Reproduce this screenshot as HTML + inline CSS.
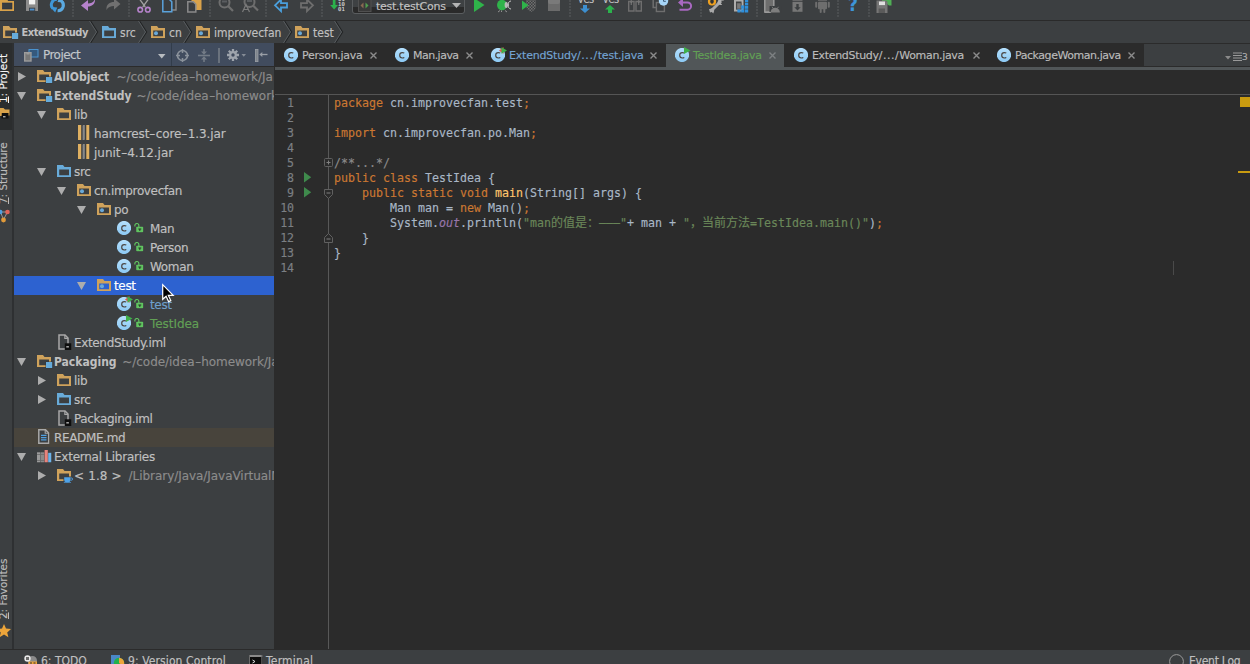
<!DOCTYPE html><html><head><meta charset="utf-8"><title>IDEA</title><style>
*{box-sizing:border-box;margin:0;padding:0}
html,body{width:1250px;height:664px;overflow:hidden;background:#3c3f41}
body{position:relative;font-family:"DejaVu Sans","Liberation Sans","Noto Sans CJK SC",sans-serif;font-size:12px;color:#c0c0c0;-webkit-text-stroke:0.15px}
.abs{position:absolute}
.t{position:absolute;white-space:nowrap;line-height:19px;height:19px;letter-spacing:-0.35px}
.b{font-family:"DejaVu Sans Condensed","DejaVu Sans","Liberation Sans",sans-serif;font-weight:bold;letter-spacing:0;-webkit-text-stroke:0}
.g{color:#8c8c8c}
.hy{display:inline-block;transform:scaleX(1.5);margin:0 1.2px}
svg{position:absolute;overflow:visible}
#toolbar{left:0;top:0;width:1250px;height:20px;background:#3c3f41}
#tbline{left:0;top:20px;width:1250px;height:1px;background:#2a2a2a}
#nav{left:0;top:21px;width:1250px;height:22px;background:#3c3f41}
.nt{position:absolute;top:22px;line-height:20px;font-size:12px;font-family:"DejaVu Sans Condensed","DejaVu Sans","Liberation Sans",sans-serif;white-space:nowrap;letter-spacing:0}
.ntb{font-family:"DejaVu Sans Condensed","DejaVu Sans","Liberation Sans",sans-serif;font-weight:bold;font-size:11px;letter-spacing:-0.42px;-webkit-text-stroke:0}
#stripe{left:0;top:43px;width:12px;height:606px;background:#3c3f41;overflow:hidden}
#stripeline{left:11.5px;top:43px;width:2.5px;height:606px;background:#2e3032}
#proj{left:14px;top:43px;width:260px;height:606px;background:#3c3f41;overflow:hidden}
#phead{left:0;top:0;width:260px;height:23px;background:#414c5e}
#pheadline{left:0;top:23px;width:260px;height:1px;background:#2b2b2b}
#sel{left:0;top:233px;width:260px;height:19px;background:#2d62d0}
#readme{left:0;top:385px;width:260px;height:19px;background:#48443c}
#vsep{left:274px;top:43px;width:1px;height:606px;background:#2b2b2b}
#editor{left:275px;top:43px;width:975px;height:606px;background:#2b2b2b;overflow:hidden}
#tabs{left:0;top:0;width:975px;height:24px;background:#3c3f41;box-shadow:inset 0 1px 0 #2b2b2b,inset 0 -1px 0 #2b2b2b}
.tab{position:absolute;top:0;height:24px;background:#2b2b2b}
.tab.sel{background:#515658;top:1px;height:23px}
.tabt{position:absolute;top:3px;line-height:20px;font-size:11px;white-space:nowrap;letter-spacing:-0.2px;color:#bbbbbb}
.x{position:absolute;top:8px;width:7px;height:7px}
#tabline{left:0;top:24px;width:975px;height:3px;background:#515658}
#edline{left:0;top:51px;width:975px;height:1px;background:#555555}
#gutline{left:52.7px;top:52px;width:1.3px;height:554px;background:#585858}
.ln{position:absolute;left:0;width:19px;text-align:right;font-family:"DejaVu Sans Mono","Liberation Mono","Noto Sans CJK SC",monospace;font-size:11.6px;line-height:15px;color:#7b7f83;letter-spacing:-0.1px}
.cl{position:absolute;left:59px;font-family:"DejaVu Sans Mono","Liberation Mono","Noto Sans CJK SC",monospace;font-size:11.63px;line-height:15px;white-space:pre;color:#a9b7c6}
.cj{font-size:12px} .k{color:#cc7832} .s{color:#6a8759} .m{color:#ffc66d} .f{color:#9876aa;font-style:italic} .c{color:#8a8a8a}
#bottomline{left:0;top:649px;width:1250px;height:1px;background:#2b2b2b}
#bottom{left:0;top:650px;width:1250px;height:14px;background:#3c3f41;overflow:hidden}
.bt{position:absolute;top:1.7px;line-height:19px;font-size:12px;white-space:nowrap;font-family:"DejaVu Sans Condensed","DejaVu Sans","Liberation Sans",sans-serif}
.vt{position:absolute;white-space:nowrap;font-size:10.4px;line-height:13px;transform-origin:0 0;transform:rotate(-90deg);letter-spacing:0}
</style></head><body>
<svg width="0" height="0" style="position:absolute"><defs>
<linearGradient id="cg" x1="0" y1="0" x2="0" y2="1"><stop offset="0" stop-color="#b5e0fd"/><stop offset="1" stop-color="#8cc9f4"/></linearGradient>
<symbol id="i-folder" viewBox="0 0 14 12"><path fill-rule="evenodd" d="M0 0h6l1.500 2H14v10H0z M2.200 4.400h9.800v5.800H2.200z" fill="#cfa25b"/></symbol>
<symbol id="i-srcfolder" viewBox="0 0 14 12"><path fill-rule="evenodd" d="M0 0h6l1.500 2H14v10H0z M2.200 4.400h9.800v5.800H2.200z" fill="#68abd9"/></symbol>
<symbol id="i-module" viewBox="0 0 16 14"><path fill-rule="evenodd" d="M0 0h6l1.500 2H14v10H0z M2.200 4.400h9.800v5.800H2.200z" fill="#cfa25b"/><rect x="8.600" y="6.600" width="7" height="6.800" fill="#33373a"/><rect x="9" y="7" width="6.200" height="6" fill="#66abdb"/></symbol>
<symbol id="i-pkg" viewBox="0 0 14 12"><path fill-rule="evenodd" d="M0 0h6l1.500 2H14v10H0z M2.200 4.400h9.800v5.800H2.200z" fill="#cfa25b"/><circle cx="5" cy="7.200" r="2" fill="#6aa9d8"/></symbol>
<symbol id="i-class" viewBox="0 0 14 14"><circle cx="7" cy="7" r="7.100" fill="url(#cg)"/><path d="M9.300 5.100Q8.300 4.600 7.300 4.600Q4.700 4.600 4.700 7.300Q4.700 10 7.300 10Q8.300 10 9.300 9.500" fill="none" stroke="#4a4441" stroke-width="1.150"/></symbol>
<symbol id="i-lock" viewBox="0 0 10 10"><path d="M0.900 3.600V2.600a2.050 2.050 0 0 1 4.100 0V4" fill="none" stroke="#60c460" stroke-width="1.200"/><rect x="2.300" y="3.800" width="7.200" height="5.700" rx="0.800" fill="#60c460"/><path d="M4.500 5.600h3v1h-1v1.700h-1V6.600h-1z" fill="#263026"/></symbol>
<symbol id="i-jar" viewBox="0 0 11.500 15"><rect x="0" y="0" width="3.200" height="15" fill="#dfb061"/><rect x="8.300" y="0" width="3.200" height="15" fill="#dfb061"/><path d="M4.600 0l2.300 1-2.300 1 2.300 1-2.300 1 2.300 1-2.300 1 2.300 1-2.300 1 2.300 1-2.300 1 2.300 1-2.300 1 2.300 1-2.300 1 2.300 1" fill="none" stroke="#9a9a9a" stroke-width="0.900"/></symbol>
<symbol id="i-iml" viewBox="0 0 13.500 16"><path d="M1 1h6l3 3v11H1z" fill="#3c3f41" stroke="#a8a8a8" stroke-width="1.500"/><path d="M6.800 1v3.400h3.300" fill="none" stroke="#a8a8a8" stroke-width="1.100"/><rect x="6.800" y="9.300" width="6.700" height="6.700" fill="#0e0e0e"/><rect x="8.300" y="12.300" width="2.600" height="1.100" fill="#e0e0e0"/></symbol>
<symbol id="i-md" viewBox="0 0 11.500 15"><path d="M0.800 0.800h6.700l3.200 3.200v10.200H0.800z" fill="#3c3f41" stroke="#a8a8a8" stroke-width="1.500"/><path d="M7.200 0.800v3.500h3.400" fill="none" stroke="#a8a8a8" stroke-width="1.100"/><path d="M3 6.400h5.500M3 8.600h5.500M3 10.800h5.500" stroke="#4f9fe0" stroke-width="1.200"/></symbol>
<symbol id="i-libs" viewBox="0 0 14.500 12.500"><rect x="0" y="2.300" width="3.500" height="10.200" fill="#9b9b9b"/><rect x="4" y="2.300" width="3.200" height="10.200" fill="#8a8a8a"/><rect x="7.600" y="0" width="3.200" height="12.500" fill="#e8837c"/><rect x="11.200" y="2.800" width="3.300" height="9.700" fill="#6eb3ea"/><path d="M0 4.500h7.200M0 10.500h7.200" stroke="#6a6a6a" stroke-width="0.800"/></symbol>
<symbol id="i-jdk" viewBox="0 0 16 14"><path fill-rule="evenodd" d="M0 0h6l1.500 2H14v10H0z M2.200 4.400h9.800v5.800H2.200z" fill="#cfa25b"/><rect x="6.500" y="7.500" width="9" height="6.500" fill="#3c3f41"/><path d="M7.200 8.200h6.300v2.500a2.500 2.500 0 0 1-2.500 2.500h-1.300a2.500 2.500 0 0 1-2.500-2.500z" fill="#4fa3e8"/><path d="M13.500 9h1a1 1 0 0 1 0 2.200h-1" fill="none" stroke="#4fa3e8" stroke-width="0.900"/><path d="M6.800 13.700h7.200" stroke="#4fa3e8" stroke-width="0.800"/></symbol>
<symbol id="i-x" viewBox="0 0 7 7"><path d="M0.5 0.5l6 6M6.5 0.5l-6 6" stroke="#8e8e8e" stroke-width="1.5"/></symbol>
<symbol id="i-run" viewBox="0 0 5 5"><path d="M0 0l5 2.5L0 5z" fill="#3fae3f"/></symbol>
</defs></svg>
<div id="toolbar" class="abs">
<svg style="left:72px;top:0" width="2" height="18"><path d="M1 0v18" stroke="#4b4e50" stroke-width="2" stroke-dasharray="2 1"/></svg>
<svg style="left:128px;top:0" width="2" height="18"><path d="M1 0v18" stroke="#4b4e50" stroke-width="2" stroke-dasharray="2 1"/></svg>
<svg style="left:209px;top:0" width="2" height="18"><path d="M1 0v18" stroke="#4b4e50" stroke-width="2" stroke-dasharray="2 1"/></svg>
<svg style="left:265px;top:0" width="2" height="18"><path d="M1 0v18" stroke="#4b4e50" stroke-width="2" stroke-dasharray="2 1"/></svg>
<svg style="left:321px;top:0" width="2" height="18"><path d="M1 0v18" stroke="#4b4e50" stroke-width="2" stroke-dasharray="2 1"/></svg>
<svg style="left:569px;top:0" width="2" height="18"><path d="M1 0v18" stroke="#4b4e50" stroke-width="2" stroke-dasharray="2 1"/></svg>
<svg style="left:700px;top:0" width="2" height="18"><path d="M1 0v18" stroke="#4b4e50" stroke-width="2" stroke-dasharray="2 1"/></svg>
<svg style="left:756px;top:0" width="2" height="18"><path d="M1 0v18" stroke="#4b4e50" stroke-width="2" stroke-dasharray="2 1"/></svg>
<svg style="left:837px;top:0" width="2" height="18"><path d="M1 0v18" stroke="#4b4e50" stroke-width="2" stroke-dasharray="2 1"/></svg>
<svg style="left:868px;top:0" width="2" height="18"><path d="M1 0v18" stroke="#4b4e50" stroke-width="2" stroke-dasharray="2 1"/></svg>
<svg style="left:0px;top:-4px" width="14" height="16"><path d="M0 0h6.500l1.500 5H14v10H0z" fill="#d9a24a"/><rect x="2.300" y="7" width="9.700" height="6" fill="#3a3d40" stroke="#2d3245" stroke-width="0.600"/></svg>
<svg style="left:26px;top:-4px" width="12" height="16"><path d="M0 0h12v15H0z" fill="#8c8c8c"/><rect x="3" y="0" width="6.200" height="8.400" fill="#f2f2f2"/><rect x="3" y="11.700" width="6.200" height="3.300" fill="#3c3f41"/><rect x="3.800" y="12.600" width="4.600" height="1.900" fill="#4a90d0"/></svg>
<svg style="left:50px;top:-3px" width="15" height="16"><path d="M7 2.300A5.500 5.500 0 0 0 2.800 11.500" fill="none" stroke="#3f96d6" stroke-width="3"/><path d="M0 9.800L7.300 10.500 5.200 15.600z" fill="#3f96d6"/><path d="M7.600 13.800A5.500 5.500 0 0 0 11.500 4.200" fill="none" stroke="#5aa9e0" stroke-width="3"/><path d="M14.500 5.500L7.500 5 9.500 0z" fill="#5aa9e0"/></svg>
<svg style="left:81px;top:-4px" width="15" height="16"><path d="M14 3c0.500 5-3 7.500-7 7.500V15L0 9.500 7 4v3.500c3 0 5.500-1 7-4.500z" fill="#b683cc"/></svg>
<svg style="left:106px;top:-4px" width="15" height="16"><path d="M0.500 14c-0.500-5.500 3-8 7.500-8V2.500L14.500 8 8 13.500V10c-3.500 0-6 1-7.500 4z" fill="#707070"/></svg>
<svg style="left:137px;top:-4px" width="14" height="17"><path d="M2.500 3L8.300 11M11.500 3L5.700 11" stroke="#a0a0a0" stroke-width="1.300" fill="none"/><circle cx="3.200" cy="13.700" r="2.300" fill="none" stroke="#b683cc" stroke-width="1.600"/><circle cx="10.800" cy="13.700" r="2.300" fill="none" stroke="#b683cc" stroke-width="1.600"/></svg>
<svg style="left:162px;top:-4px" width="15" height="17"><path d="M6.500 0.600h7.500v13.400H6.500z" fill="#3c3f41" stroke="#8a8a8a" stroke-width="1.400"/><path d="M0.800 2.800h6l3 3v10H0.800z" fill="#3a3d40" stroke="#5aa3dc" stroke-width="1.500"/></svg>
<svg style="left:187px;top:-4px" width="15" height="17"><rect x="4.500" y="0" width="10" height="14" fill="#d9a24a"/><path d="M0.800 5.800h5.500l2.500 2.500v7.800H0.800z" fill="#3a3d40" stroke="#8a8a8a" stroke-width="1.500"/></svg>
<svg style="left:218px;top:-4px" width="16" height="16"><circle cx="6.500" cy="6.500" r="5" fill="none" stroke="#6e6e6e" stroke-width="2"/><path d="M10.300 10.300L15 15" stroke="#6e6e6e" stroke-width="2.200"/><path d="M4 5.500h5" stroke="#5a5d60" stroke-width="2"/></svg>
<svg style="left:242px;top:-4px" width="17" height="17"><circle cx="7.500" cy="6" r="5" fill="none" stroke="#6e6e6e" stroke-width="2"/><path d="M11.300 9.800L16 14.500" stroke="#6e6e6e" stroke-width="2.200"/><path d="M0.500 16L4 8.500 7.500 16M1.800 13.500h4.400" stroke="#7a7a7a" stroke-width="1.200" fill="none"/><path d="M5 5h5" stroke="#5a5d60" stroke-width="2"/></svg>
<svg style="left:274px;top:-4px" width="14" height="17"><path d="M1 9.300L7 3.500v3.600h6v4.400h-6v3.600z" fill="none" stroke="#4a9fdc" stroke-width="1.800"/></svg>
<svg style="left:300px;top:-4px" width="14" height="17"><path d="M13 9.300L7 3.500v3.600h-6v4.400h6v3.600z" fill="none" stroke="#6e6e6e" stroke-width="1.800"/></svg>
<svg style="left:330px;top:-4px" width="16" height="17"><path d="M2.800 0h2.700v9H8L4.100 13.500 0.200 9h2.600z" fill="#2bb24c"/></svg>
<div class="abs" style="left:338px;top:-3px;font-family:'DejaVu Sans Mono',monospace;font-size:5.500px;line-height:5px;color:#d8d8d8;letter-spacing:0.3px">01<br>10<br>01</div>
<div class="abs" style="left:352px;top:-4px;width:113px;height:18px;border:1px solid #5a5d5f;border-radius:3px;background:linear-gradient(#3e4143 0,#3e4143 62%,#2a2a2a 65%,#2a2a2a 100%)"></div>
<svg style="left:358px;top:-1px" width="13" height="13"><rect x="0.500" y="0.500" width="12.500" height="12" fill="#3a3a3a" stroke="#505050"/><path d="M5.500 3.500v6L2.500 6.500z" fill="#8a6a52"/><path d="M7.500 3.500v6l3-3z" fill="#4f9e4f"/></svg>
<div class="abs" style="left:376px;top:-1px;font-size:11px;line-height:16px;letter-spacing:-0.25px;color:#c4c4c4;white-space:nowrap">test.testCons</div>
<svg style="left:452px;top:3px" width="9" height="5"><path d="M0 0h9L4.500 5z" fill="#b4b4b4"/></svg>
<svg style="left:474px;top:-2px" width="11" height="14"><path d="M0 0l10.500 7L0 14z" fill="#2fb34a"/></svg>
<svg style="left:497px;top:-4px" width="15" height="17"><ellipse cx="5" cy="9" rx="5" ry="5.200" fill="#2fb34a"/><ellipse cx="9.300" cy="9" rx="1.700" ry="3" fill="#b8b8b8"/><path d="M14 5C11.800 5.200 11.300 6.500 11.300 9C11.300 11.500 11.800 12.800 14 13" stroke="#c8c8c8" stroke-width="1" fill="none"/><path d="M1 16l2-1.500M4.500 14.500v1.500M8 14.500l2 1.500" stroke="#9a9a9a" stroke-width="0.900"/></svg>
<svg style="left:522px;top:-4px" width="15" height="17"><defs><pattern id="chk" width="3" height="3" patternUnits="userSpaceOnUse"><rect width="1.500" height="1.500" fill="#707070"/><rect x="1.500" y="1.500" width="1.500" height="1.500" fill="#707070"/></pattern></defs><path d="M4 3h10v7c0 3-2.500 5-5 6-2.500-1-5-3-5-6z" fill="url(#chk)"/><path d="M0 4.500l6.500 4.700L0 14z" fill="#2fb34a"/></svg>
<svg style="left:548px;top:-4px" width="12" height="15"><rect x="0" y="0" width="12" height="15" fill="#6b6b6b"/><rect x="0" y="0" width="12" height="8" rx="2" fill="#7a7a7a"/></svg>
<div class="abs" style="left:578px;top:-3.600px;font-size:8px;line-height:10px;letter-spacing:0px;color:#c8c8c8">VCS</div>
<svg style="left:580px;top:5px" width="10" height="8"><path d="M3 0h4v3.500h3L5 8 0 3.500h3z" fill="#3d8fd0"/></svg>
<div class="abs" style="left:603px;top:-3.600px;font-size:8px;line-height:10px;letter-spacing:0px;color:#c8c8c8">VCS</div>
<svg style="left:605px;top:5px" width="10" height="8"><path d="M3 8h4V4.500h3L5 0 0 4.500h3z" fill="#2bb24c"/></svg>
<svg style="left:628px;top:-4px" width="14" height="16"><path d="M0.700 5.500h5.300v9.500H0.700zM8 5.500h5.300v9.500H8z" fill="none" stroke="#6e6e6e" stroke-width="1.400"/><path d="M3.300 2v7M10.700 2v7" stroke="#6e6e6e" stroke-width="1.300"/><path d="M1.800 5.500h3l-1.500 2zM9.200 5.500h3l-1.500 2z" fill="#7a7a7a"/></svg>
<svg style="left:652px;top:-4px" width="17" height="17"><rect x="1.200" y="1" width="8.600" height="10.500" fill="none" stroke="#6e6e6e" stroke-width="1.500"/><rect x="4.400" y="6.500" width="8" height="9" fill="#3c3f41" stroke="#6e6e6e" stroke-width="1.400"/><circle cx="11.500" cy="5" r="4.700" fill="#a6d5f7"/><path d="M11.500 2.500v2.800h2.300" stroke="#3c5a78" stroke-width="1" fill="none"/></svg>
<svg style="left:678px;top:-4px" width="15" height="17"><path d="M3 6.500h6.500a3.600 3.600 0 0 1 0 7.200H1.500" fill="none" stroke="#a868c0" stroke-width="2"/><path d="M0 6.500l5-4.500v9z" fill="#a868c0"/></svg>
<svg style="left:707px;top:-4px" width="18" height="18"><path d="M4.500 14.500L14 5" stroke="#a8a8a8" stroke-width="3"/><path d="M11.500 3.500a3.800 3.800 0 0 1 5.500 1l-2.800 0.300-0.800 2 1.800 2a3.800 3.800 0 0 1-4.800-2.300z" fill="#b0b0b0"/><path d="M2 13.200l3-1 2.300 2.300-1 3-1.500-1.500-1.800 0.500-0.500-1.800z" fill="#a8a8a8"/><circle cx="5" cy="5.500" r="3" fill="none" stroke="#eda020" stroke-width="2.200"/><rect x="4.200" y="4" width="1.600" height="3.500" fill="#2e2e2e"/></svg>
<svg style="left:734px;top:-4px" width="15" height="17"><rect x="1" y="4.500" width="7.500" height="10" fill="none" stroke="#adadad" stroke-width="2"/><rect x="2.800" y="7" width="4.200" height="6" fill="#7a7a7a" stroke="#4a4a4a" stroke-width="0.600"/><g fill="#2f8fdb"><rect x="11" y="3.500" width="3.200" height="2.700"/><rect x="11" y="6.700" width="3.200" height="2.700"/><rect x="11" y="9.900" width="3.200" height="2.900"/><rect x="11" y="13.300" width="3.200" height="3.200"/><rect x="7.200" y="13.300" width="3.200" height="3.200"/><rect x="3.400" y="13.300" width="3.200" height="3.200"/><rect x="7.200" y="9.400" width="3.200" height="3.400"/></g></svg>
<svg style="left:764px;top:-4px" width="17" height="17"><rect x="0.800" y="0.800" width="9" height="15.200" fill="#6e6e6e" stroke="#9a9a9a" stroke-width="1.500"/><rect x="5.500" y="10" width="12" height="7" fill="#3c3f41"/><path d="M6.500 16.500a4.700 4.700 0 0 1 9.400 0z" fill="#7e7e7e"/><path d="M8 10.800l1.300 1.800M14.500 10.800l-1.300 1.800" stroke="#7e7e7e" stroke-width="0.900"/><path d="M0.800 16.500h6" stroke="#9a9a9a" stroke-width="1"/></svg>
<svg style="left:792px;top:-4px" width="11" height="16"><path d="M0.500 4.800a5 5 0 0 1 10 0z" fill="#767676"/><rect x="0.500" y="5.800" width="10" height="10" fill="#767676"/><path d="M4.300 8h2.400v3.200h2L5.500 14.500 2.300 11.200h2z" fill="#3c3f41"/></svg>
<svg style="left:815px;top:-4px" width="15" height="17"><path d="M3 4.800a4.500 4.500 0 0 1 9 0z" fill="#6e6e6e"/><rect x="3" y="5.700" width="9" height="7.500" rx="1" fill="#6e6e6e"/><rect x="0.200" y="5.700" width="2" height="6" rx="1" fill="#6e6e6e"/><rect x="12.800" y="5.700" width="2" height="6" rx="1" fill="#6e6e6e"/><rect x="4.700" y="12" width="2" height="5" rx="1" fill="#6e6e6e"/><rect x="8.300" y="12" width="2" height="5" rx="1" fill="#6e6e6e"/></svg>
<div class="abs" style="left:848px;top:-6px;font-family:'DejaVu Sans Condensed','DejaVu Sans',sans-serif;font-weight:bold;font-size:19px;line-height:20px;color:#3d95d8">?</div>
<svg style="left:876px;top:-4px" width="16" height="17"><path d="M6 0h9.500v9.500h-2.500l-2-1.500V5H6z" fill="#4fae55"/><path d="M0.500 4.500h9.500l1.500 1.500V17H0.500z" fill="#767676"/><rect x="3" y="5.500" width="6" height="3.600" fill="#e0e0e0"/><rect x="2.600" y="12.500" width="6.400" height="4.500" fill="#5a5a5a"/></svg>
</div>
<div id="tbline" class="abs"></div>
<div id="nav" class="abs">
<svg style="left:3px;top:5px" width="16" height="14" ><use href="#i-module" width="16" height="14"/></svg>
<div class="nt ntb" style="left:21.5px;top:2px">ExtendStudy</div>
<svg style="left:88.7px;top:0" width="10" height="22"><path d="M1.600 0L8.600 11L1.600 22" fill="none" stroke="#222425" stroke-width="1.200"/><path d="M0.500 0L7.500 11L0.500 22" fill="none" stroke="#585c5f" stroke-width="1"/></svg>
<svg style="left:102px;top:5px" width="14" height="12" ><use href="#i-srcfolder" width="14" height="12"/></svg>
<div class="nt" style="left:120px;top:2px">src</div>
<svg style="left:137.7px;top:0" width="10" height="22"><path d="M1.600 0L8.600 11L1.600 22" fill="none" stroke="#222425" stroke-width="1.200"/><path d="M0.500 0L7.500 11L0.500 22" fill="none" stroke="#585c5f" stroke-width="1"/></svg>
<svg style="left:151px;top:5px" width="14" height="12" ><use href="#i-pkg" width="14" height="12"/></svg>
<div class="nt" style="left:169px;top:2px">cn</div>
<svg style="left:183.2px;top:0" width="10" height="22"><path d="M1.600 0L8.600 11L1.600 22" fill="none" stroke="#222425" stroke-width="1.200"/><path d="M0.500 0L7.500 11L0.500 22" fill="none" stroke="#585c5f" stroke-width="1"/></svg>
<svg style="left:196px;top:5px" width="14" height="12" ><use href="#i-pkg" width="14" height="12"/></svg>
<div class="nt" style="left:214px;top:2px">improvecfan</div>
<svg style="left:283.3px;top:0" width="10" height="22"><path d="M1.600 0L8.600 11L1.600 22" fill="none" stroke="#222425" stroke-width="1.200"/><path d="M0.500 0L7.500 11L0.500 22" fill="none" stroke="#585c5f" stroke-width="1"/></svg>
<svg style="left:295px;top:5px" width="14" height="12" ><use href="#i-pkg" width="14" height="12"/></svg>
<div class="nt" style="left:313px;top:2px">test</div>
<svg style="left:334.4px;top:0" width="10" height="22"><path d="M1.600 0L8.600 11L1.600 22" fill="none" stroke="#222425" stroke-width="1.200"/><path d="M0.500 0L7.500 11L0.500 22" fill="none" stroke="#585c5f" stroke-width="1"/></svg>
</div>
<div id="stripe" class="abs">
<div class="abs" style="left:0;top:0;width:12px;height:87px;background:#2b2d2e"></div>
<div class="vt" style="left:-2.6px;top:59.5px;color:#f4f4f4"><u>1</u>: Project</div>
<svg style="left:0;top:64px" width="10" height="12"><path d="M0 1h3.500l1.500 1.500h4.500v6H0z" fill="#d9a24a"/><rect x="1.500" y="6" width="7" height="5.500" fill="#101010"/><path d="M3 9.800h2.500" stroke="#eee" stroke-width="1"/><rect x="0" y="5" width="1.500" height="4" fill="#d9a24a"/></svg>
<div class="vt" style="left:-2.6px;top:160.8px;color:#bbbbbb"><u>7</u>: Structure</div>
<svg style="left:0;top:164px" width="11" height="17"><path d="M0.500 5l3 7.500L7.500 5z" stroke="#a0a0a0" stroke-width="0.900" fill="none"/><circle cx="0.300" cy="5" r="2.200" fill="#4f9fe0"/><circle cx="7.500" cy="5" r="2.300" fill="#e0645a"/><circle cx="3.500" cy="13" r="2.400" fill="#e09a3a"/></svg>
<div class="vt" style="left:-2.6px;top:576.3px;color:#bbbbbb"><u>2</u>: Favorites</div>
<svg style="left:-3.500px;top:581px" width="14" height="13"><path d="M7 0l2 4.600 5 0.500-3.800 3.300 1.200 4.900L7 10.600 2.600 13.300l1.200-4.900L0 5.100l5-0.500z" fill="#eda53a"/></svg>
</div><div id="stripeline" class="abs"></div>
<div id="proj" class="abs">
<div id="phead" class="abs">
<svg style="left:10px;top:6px" width="15" height="13"><rect x="5" y="0.500" width="9" height="7.500" fill="#35597d" stroke="#4a93cf" stroke-width="1"/><rect x="0.700" y="3.700" width="6.300" height="8.300" fill="#777" stroke="#9c9c9c" stroke-width="1.400"/><path d="M2.500 3.500h3v2h-3z" fill="#9c9c9c"/></svg>
<div class="t" style="left:29px;top:3px;color:#c3c7cb;letter-spacing:-0.55px">Project</div>
<svg style="left:143.500px;top:11px" width="8" height="5"><path d="M0 0h7.500L3.750 4.500z" fill="#b8bcc0"/></svg>
<div class="abs" style="left:157px;top:0;width:1px;height:23px;background:#323d4b"></div>
<svg style="left:162px;top:6px" width="13" height="13"><circle cx="6.500" cy="6.500" r="5" fill="none" stroke="#8b929b" stroke-width="1.600"/><path d="M6.500 0v4M6.500 9v4M0 6.500h4M9 6.500h4" stroke="#8b929b" stroke-width="1.500"/></svg>
<svg style="left:184px;top:6px" width="12" height="13"><path d="M0 6.500h12" stroke="#747c87" stroke-width="1.600"/><path d="M6 0v4M6 9v4" stroke="#747c87" stroke-width="1.500"/><path d="M3 2.500L6 5.800l3-3.300zM3 10.500L6 7.200l3 3.300z" fill="#747c87"/></svg>
<div class="abs" style="left:204px;top:5px;width:2px;height:15px;background:#6a727d"></div>
<svg style="left:213px;top:6px" width="20" height="13"><g stroke="#9ea4ac" stroke-width="2.300"><path d="M6 0v12M0 6h12M1.800 1.800l8.400 8.400M10.200 1.800l-8.400 8.400"/></g><circle cx="6" cy="6" r="3.900" fill="#9ea4ac"/><circle cx="6" cy="6" r="1.700" fill="#414c5e"/><path d="M14.500 5h4.500l-2.250 2.800z" fill="#858c96"/></svg>
<svg style="left:241px;top:6px" width="13" height="13"><rect x="0.400" y="0.400" width="2.600" height="12.200" fill="#7f858d" stroke="#9a9fa6" stroke-width="0.800"/><path d="M6 5.500h6.500" stroke="#9a9fa6" stroke-width="1.300"/><path d="M4.300 5.500l3-2.600v5.200z" fill="#9a9fa6"/></svg>
</div><div id="pheadline" class="abs"></div>
<div id="sel" class="abs"></div><div id="readme" class="abs"></div>
<svg style="left:4px;top:29px" width="8" height="9"><path d="M0 0l8 4.5L0 9z" fill="#adadad"/></svg>
<svg style="left:23px;top:27px" width="16" height="14" ><use href="#i-module" width="16" height="14"/></svg>
<div class="t b" style="left:40px;top:25px;">AllObject</div>
<div class="t g" style="left:102.4px;top:25px;letter-spacing:-0.05px">~/code/idea<span class="hy">-</span>homework/Ja</div>
<svg style="left:3px;top:49px" width="9" height="8"><path d="M0 0h9L4.5 8z" fill="#adadad"/></svg>
<svg style="left:23px;top:46px" width="16" height="14" ><use href="#i-module" width="16" height="14"/></svg>
<div class="t b" style="left:40px;top:44px;">ExtendStudy</div>
<div class="t g" style="left:122.4px;top:44px;letter-spacing:-0.05px">~/code/idea<span class="hy">-</span>homework</div>
<svg style="left:23px;top:68px" width="9" height="8"><path d="M0 0h9L4.5 8z" fill="#adadad"/></svg>
<svg style="left:43px;top:65px" width="14" height="12" ><use href="#i-folder" width="14" height="12"/></svg>
<div class="t" style="left:60px;top:63px;">lib</div>
<svg style="left:64px;top:82px" width="11.5" height="15" ><use href="#i-jar" width="11.5" height="15"/></svg>
<div class="t" style="left:80px;top:82px;letter-spacing:-0.13px;">hamcrest<span class="hy">-</span>core<span class="hy">-</span>1.3.jar</div>
<svg style="left:64px;top:101px" width="11.5" height="15" ><use href="#i-jar" width="11.5" height="15"/></svg>
<div class="t" style="left:80px;top:101px;letter-spacing:-0.02px;">junit<span class="hy">-</span>4.12.jar</div>
<svg style="left:23px;top:125px" width="9" height="8"><path d="M0 0h9L4.5 8z" fill="#adadad"/></svg>
<svg style="left:43px;top:122px" width="14" height="12" ><use href="#i-srcfolder" width="14" height="12"/></svg>
<div class="t" style="left:60px;top:120px;">src</div>
<svg style="left:43px;top:144px" width="9" height="8"><path d="M0 0h9L4.5 8z" fill="#adadad"/></svg>
<svg style="left:63px;top:141px" width="14" height="12" ><use href="#i-pkg" width="14" height="12"/></svg>
<div class="t" style="left:80px;top:139px;">cn.improvecfan</div>
<svg style="left:63px;top:163px" width="9" height="8"><path d="M0 0h9L4.5 8z" fill="#adadad"/></svg>
<svg style="left:83px;top:160px" width="14" height="12" ><use href="#i-pkg" width="14" height="12"/></svg>
<div class="t" style="left:100px;top:158px;">po</div>
<svg style="left:103px;top:178px" width="14" height="14" ><use href="#i-class" width="14" height="14"/></svg>
<svg style="left:120.2px;top:180px" width="9.7" height="9.7" ><use href="#i-lock" width="9.7" height="9.7"/></svg>
<div class="t" style="left:136px;top:177px;">Man</div>
<svg style="left:103px;top:197px" width="14" height="14" ><use href="#i-class" width="14" height="14"/></svg>
<svg style="left:120.2px;top:199px" width="9.7" height="9.7" ><use href="#i-lock" width="9.7" height="9.7"/></svg>
<div class="t" style="left:136px;top:196px;">Person</div>
<svg style="left:103px;top:216px" width="14" height="14" ><use href="#i-class" width="14" height="14"/></svg>
<svg style="left:120.2px;top:218px" width="9.7" height="9.7" ><use href="#i-lock" width="9.7" height="9.7"/></svg>
<div class="t" style="left:136px;top:215px;">Woman</div>
<svg style="left:63px;top:239px" width="9" height="8"><path d="M0 0h9L4.5 8z" fill="#adadad"/></svg>
<svg style="left:83px;top:236px" width="14" height="12" ><use href="#i-pkg" width="14" height="12"/></svg>
<div class="t" style="left:100px;top:234px;color:#ffffff;">test</div>
<svg style="left:103px;top:254px" width="14" height="14" ><use href="#i-class" width="14" height="14"/></svg>
<svg style="left:110.5px;top:252.5px" width="8" height="7"><path d="M4.500 0L0 3.500 4.500 7z" fill="#e05a4f"/><path d="M2.500 0.200l5.500 3.300-5.500 3.300z" fill="#3fb04a"/></svg>
<svg style="left:120.2px;top:256px" width="9.7" height="9.7" ><use href="#i-lock" width="9.7" height="9.7"/></svg>
<div class="t" style="left:136px;top:253px;color:#6f9fcc;">test</div>
<svg style="left:103px;top:273px" width="14" height="14" ><use href="#i-class" width="14" height="14"/></svg>
<svg style="left:111.5px;top:271.5px" width="7" height="7"><path d="M0 0l6.500 3.500L0 7z" fill="#3fb04a"/></svg>
<svg style="left:120.2px;top:275px" width="9.7" height="9.7" ><use href="#i-lock" width="9.7" height="9.7"/></svg>
<div class="t" style="left:136px;top:272px;color:#62a055;letter-spacing:-0.05px;">TestIdea</div>
<svg style="left:44px;top:291.3px" width="13.5" height="16" ><use href="#i-iml" width="13.5" height="16"/></svg>
<div class="t" style="left:60px;top:291px;">ExtendStudy.iml</div>
<svg style="left:3px;top:315px" width="9" height="8"><path d="M0 0h9L4.5 8z" fill="#adadad"/></svg>
<svg style="left:23px;top:312px" width="16" height="14" ><use href="#i-module" width="16" height="14"/></svg>
<div class="t b" style="left:40px;top:310px;">Packaging</div>
<div class="t g" style="left:108.3px;top:310px;letter-spacing:-0.05px">~/code/idea<span class="hy">-</span>homework/Ja</div>
<svg style="left:24px;top:333px" width="8" height="9"><path d="M0 0l8 4.5L0 9z" fill="#adadad"/></svg>
<svg style="left:43px;top:331px" width="14" height="12" ><use href="#i-folder" width="14" height="12"/></svg>
<div class="t" style="left:60px;top:329px;">lib</div>
<svg style="left:24px;top:352px" width="8" height="9"><path d="M0 0l8 4.5L0 9z" fill="#adadad"/></svg>
<svg style="left:43px;top:350px" width="14" height="12" ><use href="#i-srcfolder" width="14" height="12"/></svg>
<div class="t" style="left:60px;top:348px;">src</div>
<svg style="left:44px;top:367.3px" width="13.5" height="16" ><use href="#i-iml" width="13.5" height="16"/></svg>
<div class="t" style="left:60px;top:367px;">Packaging.iml</div>
<svg style="left:24px;top:386px" width="11.5" height="15" ><use href="#i-md" width="11.5" height="15"/></svg>
<div class="t" style="left:40px;top:386px;">README.md</div>
<svg style="left:3px;top:410px" width="9" height="8"><path d="M0 0h9L4.5 8z" fill="#adadad"/></svg>
<svg style="left:23px;top:407.3px" width="14.5" height="12.5" ><use href="#i-libs" width="14.5" height="12.5"/></svg>
<div class="t" style="left:40px;top:405px;letter-spacing:-0.25px;">External Libraries</div>
<svg style="left:24px;top:428px" width="8" height="9"><path d="M0 0l8 4.5L0 9z" fill="#adadad"/></svg>
<svg style="left:43px;top:426px" width="16" height="14" ><use href="#i-jdk" width="16" height="14"/></svg>
<div class="t" style="left:60px;top:424px;letter-spacing:0.0px;word-spacing:0.4px;">&lt; 1.8 &gt;</div>
<div class="t g" style="left:114.6px;top:424px;letter-spacing:-0.05px">/Library/Java/JavaVirtualMachines</div>
</div>
<div id="vsep" class="abs"></div>
<div id="editor" class="abs">
<div id="tabs" class="abs">
<div class="tab" style="left:0px;width:110px"></div>
<svg style="left:9px;top:5px" width="14" height="14" ><use href="#i-class" width="14" height="14"/></svg>
<div class="tabt" style="left:27px;letter-spacing:-0.27px">Person.java</div>
<svg style="left:95px;top:8.700px" width="7" height="7"><path d="M0.500 0.500l6 6M6.500 0.500l-6 6" stroke="#8c8c8c" stroke-width="1.400"/></svg>
<div class="tab" style="left:110px;width:97px"></div>
<svg style="left:120px;top:5px" width="14" height="14" ><use href="#i-class" width="14" height="14"/></svg>
<div class="tabt" style="left:138px;letter-spacing:-0.52px">Man.java</div>
<svg style="left:191px;top:8.700px" width="7" height="7"><path d="M0.500 0.500l6 6M6.500 0.500l-6 6" stroke="#8c8c8c" stroke-width="1.400"/></svg>
<div class="tab" style="left:207px;width:184px"></div>
<svg style="left:216px;top:5px" width="14" height="14" ><use href="#i-class" width="14" height="14"/></svg>
<svg style="left:223.5px;top:3.500px" width="8" height="7"><path d="M4.500 0L0 3.500 4.500 7z" fill="#e05a4f"/><path d="M2.500 0.200l5.500 3.300-5.500 3.300z" fill="#3fb04a"/></svg>
<div class="tabt" style="left:234px;color:#74a3d2;letter-spacing:-0.2px">ExtendStudy<span style="letter-spacing:0.55px">/.../</span>test.java</div>
<svg style="left:375.29999999999995px;top:8.700px" width="7" height="7"><path d="M0.500 0.500l6 6M6.500 0.500l-6 6" stroke="#8c8c8c" stroke-width="1.400"/></svg>
<div class="tab sel" style="left:391px;width:118px"></div>
<svg style="left:400px;top:5px" width="14" height="14" ><use href="#i-class" width="14" height="14"/></svg>
<svg style="left:408.5px;top:3.500px" width="7" height="7"><path d="M0 0l6.500 3.500L0 7z" fill="#3fb04a"/></svg>
<div class="tabt" style="left:418px;color:#62a055;letter-spacing:-0.25px">TestIdea.java</div>
<svg style="left:494.29999999999995px;top:8.700px" width="7" height="7"><path d="M0.500 0.500l6 6M6.500 0.500l-6 6" stroke="#7d8183" stroke-width="1.400"/></svg>
<div class="tab" style="left:509px;width:204px"></div>
<svg style="left:519px;top:5px" width="14" height="14" ><use href="#i-class" width="14" height="14"/></svg>
<div class="tabt" style="left:537px;letter-spacing:-0.33px">ExtendStudy<span style="letter-spacing:0.55px">/.../</span>Woman.java</div>
<svg style="left:697.5px;top:8.700px" width="7" height="7"><path d="M0.500 0.500l6 6M6.500 0.500l-6 6" stroke="#8c8c8c" stroke-width="1.400"/></svg>
<div class="tab" style="left:713px;width:156px"></div>
<svg style="left:722px;top:5px" width="14" height="14" ><use href="#i-class" width="14" height="14"/></svg>
<div class="tabt" style="left:740px;letter-spacing:-0.45px">PackageWoman.java</div>
<svg style="left:852.5px;top:8.700px" width="7" height="7"><path d="M0.500 0.500l6 6M6.500 0.500l-6 6" stroke="#8c8c8c" stroke-width="1.400"/></svg>
<svg style="left:949.500px;top:8.500px" width="24" height="11"><path d="M0 4h6L3 7.500z" fill="#8a8a8a"/><path d="M8 1h9M8 3.500h9M8 6h9M8 8.500h9" stroke="#9a9a9a" stroke-width="1"/></svg>
<div class="abs" style="left:967px;top:8px;font-size:9px;line-height:12px;color:#b0b0b0">3</div>
</div><div id="tabline" class="abs"></div><div id="edline" class="abs"></div><div id="gutline" class="abs"></div>
<div class="abs" style="left:965px;top:54px;width:10px;height:10px;background:#c99b10"></div>
<div class="abs" style="left:963px;top:128px;width:12px;height:2px;background:#c99b10"></div>
<div class="abs" style="left:898px;top:218px;width:1px;height:14px;background:#4a4a4a"></div>
<div class="ln" style="top:53px">1</div>
<div class="cl" style="top:53px"><span class="k">package</span> cn.improvecfan.test<span class="k">;</span></div>
<div class="ln" style="top:68px">2</div>
<div class="ln" style="top:83px">3</div>
<div class="cl" style="top:83px"><span class="k">import</span> cn.improvecfan.po.Man<span class="k">;</span></div>
<div class="ln" style="top:98px">4</div>
<div class="ln" style="top:113px">5</div>
<div class="cl" style="top:113px"><span class="c">/**...*/</span></div>
<div class="ln" style="top:128px">8</div>
<div class="cl" style="top:128px"><span class="k">public class</span> TestIdea {</div>
<div class="ln" style="top:143px">9</div>
<div class="cl" style="top:143px">    <span class="k">public static void</span> <span class="m">main</span>(String[] args) {</div>
<div class="ln" style="top:158px">10</div>
<div class="cl" style="top:158px">        Man man = <span class="k">new</span> Man()<span class="k">;</span></div>
<div class="ln" style="top:173px">11</div>
<div class="cl" style="top:173px">        System.<span class="f">out</span>.println(<span class="s">"man<span class="cj">的值是：</span>———"</span>+ man + <span class="s">"<span class="cj">，当前方法</span>=TestIdea.main()"</span>)<span class="k">;</span></div>
<div class="ln" style="top:188px">12</div>
<div class="cl" style="top:188px">    }</div>
<div class="ln" style="top:203px">13</div>
<div class="cl" style="top:203px">}</div>
<div class="ln" style="top:218px">14</div>
<svg style="left:29px;top:129px" width="8" height="11"><path d="M0 0l7.200 5.300L0 10.600z" fill="#3f8a4c"/></svg>
<svg style="left:29px;top:144px" width="8" height="11"><path d="M0 0l7.200 5.300L0 10.600z" fill="#3f8a4c"/></svg>
<svg style="left:48.69999999999999px;top:115.30000000000001px" width="9" height="9"><rect x="0.5" y="0.5" width="8" height="8" rx="1" fill="#2b2b2b" stroke="#606060"/><path d="M2.500 4.500h4M4.500 2.500v4" stroke="#808080" stroke-width="1"/></svg>
<svg style="left:48.69999999999999px;top:146px" width="9" height="10"><path d="M0.500 0.500h8v5l-4 4-4-4z" fill="#2b2b2b" stroke="#606060"/><path d="M2.500 4h4" stroke="#808080" stroke-width="1"/></svg>
<svg style="left:48.69999999999999px;top:189.5px" width="9" height="10"><path d="M0.500 9.500h8v-5l-4-4-4 4z" fill="#2b2b2b" stroke="#606060"/><path d="M2.500 6h4" stroke="#808080" stroke-width="1"/></svg>
</div>
<svg style="left:162px;top:284px;z-index:9" width="13" height="19"><path d="M0.700 0.700V15.300L4.100 12.200 6.600 17.600 8.800 16.600 6.300 11.300H11.200z" fill="#000" stroke="#fff" stroke-width="1.200" stroke-linejoin="miter"/></svg>
<div id="bottomline" class="abs"></div><div id="bottom" class="abs">
<svg style="left:24px;top:5px" width="14" height="12"><path d="M4 5.500a4.500 4.500 0 0 1 9 0v4.500H4z" fill="#8a8a8a"/><path d="M4.500 6.500h8.500v4H4.500z" fill="#eda53a"/><path d="M6 8h2M9.500 8h2" stroke="#333" stroke-width="1.200"/><circle cx="3.500" cy="3.500" r="3.200" fill="#e8e8e8"/><rect x="2" y="2" width="3" height="3" fill="#6a6a6a"/></svg>
<div class="bt" style="left:41px;letter-spacing:0">6: TODO</div>
<svg style="left:111px;top:5px" width="14" height="12"><rect x="0" y="0" width="9" height="12" fill="#4a88c7"/><circle cx="8" cy="8" r="5.200" fill="#22b14c"/><path d="M8 8V2.800a5.200 5.200 0 0 1 5.200 5.200z" fill="#eda53a"/><path d="M8 8h5.200a5.200 5.200 0 0 1-1 3z" fill="#eda53a"/></svg>
<div class="bt" style="left:128px;letter-spacing:0.1px">9: Version Control</div>
<svg style="left:248.700px;top:5.300px" width="13.300" height="12"><rect x="0" y="0" width="13.300" height="12" fill="#0c0c0c"/><rect x="0" y="0" width="13.300" height="2" fill="#8a8a8a"/><path d="M0.500 0v12M12.800 0v12" stroke="#6a6a6a" stroke-width="1"/><path d="M3.500 5l2.500 1.500-2.500 1.500" stroke="#ddd" stroke-width="1" fill="none"/></svg>
<div class="bt" style="left:266px;letter-spacing:0.23px">Terminal</div>
<svg style="left:1169px;top:4px" width="15" height="15"><circle cx="7.500" cy="7.500" r="6.900" fill="#3a3d3f" stroke="#9a9a9a" stroke-width="1"/></svg>
<div class="bt" style="left:1189px;letter-spacing:-0.25px">Event Log</div>
</div>
</body></html>
